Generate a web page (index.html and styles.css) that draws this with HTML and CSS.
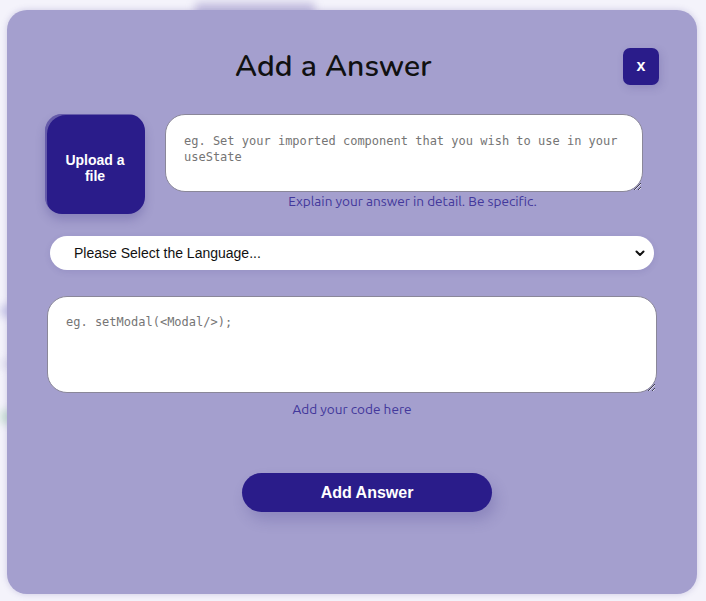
FILE: index.html
```html
<!DOCTYPE html>
<html>
<head>
<meta charset="utf-8">
<link rel="stylesheet" href="styles.css">
</head>
<body>
<div class="page">
  <div class="ghost ghost-top"></div>
  <div class="ghost ghost-line1"></div>
  <div class="ghost ghost-line2"></div>
  <div class="ghost ghost-green"></div>
</div>
<div class="overlay">
  <div class="modal">
    <div class="header">
      <h1 class="title">Add a Answer</h1>
      <button class="close">x</button>
    </div>
    <div class="row">
      <button class="upload">Upload a<br>file</button>
      <div class="desc">
        <textarea class="area area-desc" placeholder="eg. Set your imported component that you wish to use in your useState"></textarea>
        <div class="hint hint-desc">Explain your answer in detail. Be specific.</div>
      </div>
    </div>
    <div class="select-wrap">
      <select class="select">
        <option>Please Select the Language...</option>
      </select>
      <svg class="chev" width="10" height="7" viewBox="0 0 10 7"><path d="M1.5 1.5 L5 5 L8.5 1.5" fill="none" stroke="#111" stroke-width="2" stroke-linecap="round" stroke-linejoin="round"/></svg>
    </div>
    <textarea class="area area-code" placeholder="eg. setModal(<Modal/>);"></textarea>
    <div class="hint hint-code">Add your code here</div>
    <button class="submit">Add Answer</button>
  </div>
</div>
</body>
</html>
```
FILE: styles.css
```css
* { box-sizing: border-box; }
html, body { margin: 0; padding: 0; }
body {
  background: #f4f3fb;
  width: 706px;
  height: 601px;
  overflow: hidden;
  font-family: "Liberation Sans", Arial, sans-serif;
}
.page {
  position: relative;
  width: 706px;
  height: 601px;
}
.ghost {
  position: absolute;
  filter: blur(4px);
  border-radius: 4px;
}
.ghost-top { left: 195px; top: 2px; width: 120px; height: 18px; background: rgba(120,110,180,0.35); }
.ghost-line1 { left: 0; top: 305px; width: 28px; height: 12px; background: rgba(120,120,200,0.35); }
.ghost-line2 { left: 0; top: 410px; width: 20px; height: 14px; background: rgba(120,190,140,0.35); }
.ghost-green { left: 0; top: 360px; width: 18px; height: 8px; background: rgba(160,160,200,0.25); }

.overlay {
  position: absolute;
  inset: 0;
  padding: 10px 9px 7px 7px;
}
.modal {
  width: 690px;
  height: 584px;
  background: #a49fce;
  border-radius: 20px;
  padding: 38px 40px 0 40px;
  display: flex;
  flex-direction: column;
  box-shadow: 0 0 6px rgba(90,80,160,0.25);
}
.header {
  display: flex;
  align-items: center;
  height: 37px;
}
.title {
  margin: 0 0 0 188px;
  font-family: "Nunito", "Lato", "Open Sans", sans-serif;
  font-weight: 600;
  font-size: 30px;
  color: #111;
  letter-spacing: 0.1px;
  line-height: 37px;
}
.close {
  margin-left: auto;
  margin-right: -2px;
  width: 36px;
  height: 37px;
  border: none;
  border-radius: 7px;
  background: #2a1c8a;
  color: #fff;
  font-family: "Liberation Sans", Arial, sans-serif;
  font-weight: 700;
  font-size: 16px;
  line-height: 1;
  padding: 0 0 2px;
  box-shadow: 2px 3px 8px rgba(60,50,130,0.18);
}
.row {
  display: flex;
  gap: 20px;
  margin-top: 29px;
  margin-left: -2px;
  height: 100px;
}
.upload {
  width: 100px;
  height: 100px;
  flex: none;
  border: none;
  border-radius: 17px;
  background: #2a1c8a;
  color: #fff;
  font-family: "Liberation Sans", Arial, sans-serif;
  font-weight: 700;
  font-size: 14px;
  line-height: 16px;
  padding: 7px 0 0;
  box-shadow: inset 4px 3px 0 -2px rgba(255,255,255,0.28), 0 6px 10px rgba(60,50,130,0.25);
}
.desc {
  width: 478px;
  display: flex;
  flex-direction: column;
}
.area {
  display: block;
  background: #fff;
  border: 1px solid #8a8799;
  border-radius: 20px;
  font-family: "DejaVu Sans Mono", "Liberation Mono", monospace;
  font-size: 12px;
  line-height: 16px;
  color: #222;
  outline: none;
}
.area::placeholder { color: #757575; }
.area-desc {
  width: 478px;
  height: 78px;
  padding: 18px 18px 16px 18px;
  resize: vertical;
}
.hint {
  font-family: "Ubuntu", "Open Sans", sans-serif;
  font-size: 13.6px;
  line-height: 17px;
  color: #42379b;
  text-align: center;
}
.hint-desc {
  margin-top: 1px;
  padding-left: 17px;
}
.select-wrap {
  position: relative;
  margin-top: 22px;
  margin-left: 3px;
  width: 604px;
  height: 34px;
}
.select {
  appearance: none;
  -webkit-appearance: none;
  width: 604px;
  height: 34px;
  border: none;
  border-radius: 17px;
  background: #fff;
  font-family: "Liberation Sans", Arial, sans-serif;
  font-size: 14px;
  color: #111;
  padding: 0 0 1px 24px;
  box-shadow: 0 2px 6px rgba(60,50,130,0.12);
  outline: none;
}
.chev {
  position: absolute;
  right: 9px;
  top: 14px;
  pointer-events: none;
}
.area-code {
  margin-top: 26px;
  width: 610px;
  height: 97px;
  padding: 17px 18px;
  resize: vertical;
}
.hint-code {
  margin-top: 8px;
}
.submit {
  margin-top: 55px;
  margin-left: 195px;
  width: 250px;
  height: 39px;
  border: none;
  border-radius: 20px;
  background: #2a1c8a;
  color: #fff;
  font-family: "Liberation Sans", Arial, sans-serif;
  font-weight: 700;
  font-size: 16px;
  box-shadow: 4px 8px 14px rgba(60,50,130,0.22);
}
```
